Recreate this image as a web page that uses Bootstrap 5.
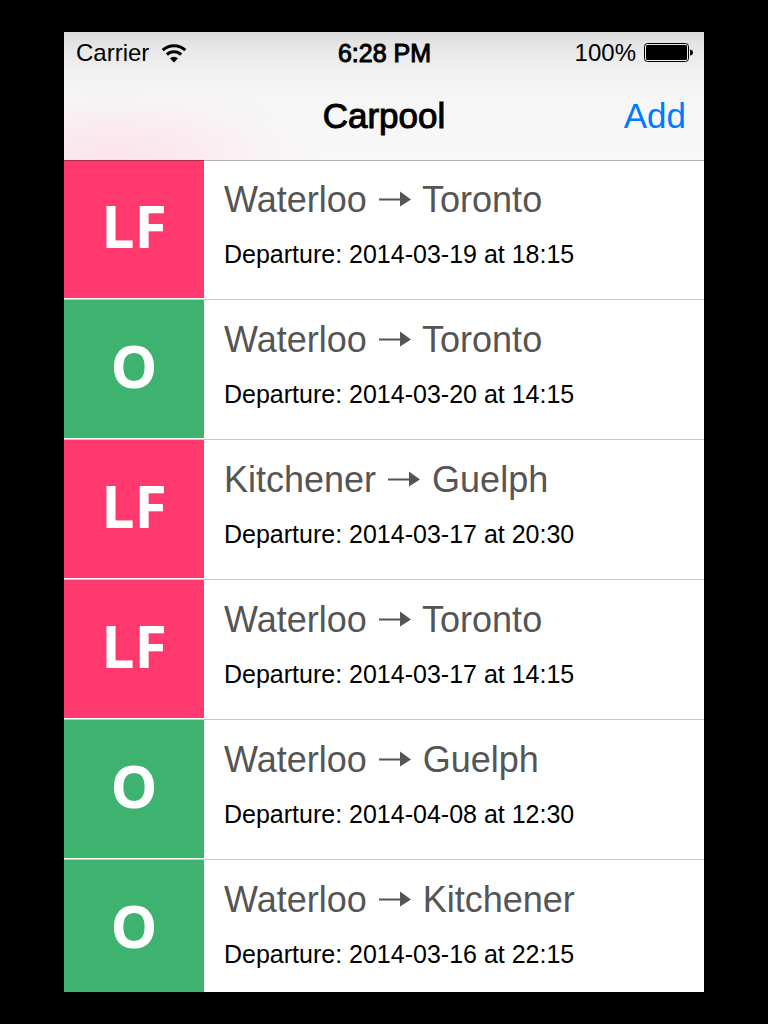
<!DOCTYPE html>
<html lang="en">
<head>
<meta charset="utf-8">
<meta name="viewport" content="width=device-width, initial-scale=1">
<title>Carpool</title>
<link href="https://cdn.jsdelivr.net/npm/bootstrap@5.3.0/dist/css/bootstrap.min.css" rel="stylesheet">
<style>
  body { background: #000; color: #000; font-family: "Liberation Sans", Arial, sans-serif; }
  .frame { padding: 32px 64px; }
  .app { height: calc(100vh - 64px); }
  .topbar {
    padding-bottom: 1px;
    background:
      linear-gradient(90deg, #b3284d 140px, #b2b2b2 140px) left bottom / 100% 1px no-repeat,
      radial-gradient(ellipse 210px 80px at 50px 100%, rgba(255, 205, 220, .5), rgba(255, 215, 226, .4) 40%, rgba(255, 225, 232, .15) 75%, rgba(255, 235, 240, 0)),
      linear-gradient(#dcdcdc, #e8e8e8 18px, #f1f1f1 40px, #f6f6f6 66px, #f8f8f8);
  }
  .three-up { display: grid; grid-template-columns: 1fr auto 1fr; align-items: center; }
  .status { height: 42px; padding: 0 11px 0 12px; font-size: 24px; line-height: 42px; }
  .titlebar { height: 86px; padding: 0 18px 2px; }
  .clock { font-size: 25px; -webkit-text-stroke: 1px #000; }
  .wifi { margin-left: 10px; }
  .heading { font-size: 35px; line-height: 40px; -webkit-text-stroke: 1px #000; }
  .add-btn { font-size: 35px; line-height: 40px; color: #007aff; }
  .ride { height: 140px; border-bottom: 1px solid #c8c7cc; }
  .ride:first-child { height: 139px; }
  .ride:first-child .info { padding-top: 18px; }
  .tile { width: 140px; margin-bottom: 1px; padding-bottom: 8px; font-family: "Open Sans", "Noto Sans", sans-serif; font-size: 59px; color: #fff; }
  .tile-pink { background: #ff386d; }
  .tile-green { background: #3eb370; }
  .info { padding: 19px 20px 0; }
  .route { font-size: 36px; line-height: 42px; color: #555; }
  .arrow {
    color: transparent;
    background: url("data:image/svg+xml,%3Csvg xmlns='http://www.w3.org/2000/svg' width='36' height='42'%3E%3Cpath fill='%23555' d='M2 20h21v-7l11 8-11 7v-6H2z'/%3E%3C/svg%3E") center / 36px 42px no-repeat;
  }
  .depart { font-size: 25px; line-height: 30px; margin-top: 18px; }
</style>
</head>
<body>
<div class="frame">
  <div class="app bg-white overflow-hidden d-flex flex-column">
    <header class="topbar flex-shrink-0">
      <div class="status three-up">
        <div class="d-flex align-items-center">
          <span>Carrier</span>
          <svg class="wifi" width="30" height="20" viewBox="0 0 30 20" aria-label="Wi-Fi" role="img">
            <g fill="none" stroke="#000" stroke-width="3">
              <path d="M3.700 7.200a16.500 16.500 0 0 1 22.600 0"/>
              <path d="M7.900 11.700a10.200 10.200 0 0 1 14.200 0"/>
            </g>
            <path d="M11 15.300a5.700 5.700 0 0 1 8 0L15 19.400z"/>
          </svg>
        </div>
        <span class="clock">6:28 PM</span>
        <div class="d-flex align-items-center justify-content-end">
          <span>100%</span>
          <svg class="ms-2" width="49" height="20" viewBox="0 0 49 20" aria-label="Battery full" role="img">
            <rect x=".5" y=".5" width="44" height="18" rx="3" fill="none" stroke="#000"/>
            <rect x="2" y="2" width="41" height="15" rx="1.500"/>
            <path d="M46 6.500q3 .5 3 3t-3 3z"/>
          </svg>
        </div>
      </div>
      <div class="titlebar three-up">
        <span></span>
        <h1 class="heading fw-normal m-0">Carpool</h1>
        <button type="button" class="add-btn btn border-0 p-0 ms-auto">Add</button>
      </div>
    </header>
    <ul class="list-unstyled m-0">
      <li class="ride d-flex">
        <div class="tile tile-pink fw-bold d-flex align-items-center justify-content-center flex-shrink-0">LF</div>
        <div class="info"><h2 class="route fw-normal m-0">Waterloo <span class="arrow">→</span> Toronto</h2><p class="depart mb-0">Departure: 2014-03-19 at 18:15</p></div>
      </li>
      <li class="ride d-flex">
        <div class="tile tile-green fw-bold d-flex align-items-center justify-content-center flex-shrink-0">O</div>
        <div class="info"><h2 class="route fw-normal m-0">Waterloo <span class="arrow">→</span> Toronto</h2><p class="depart mb-0">Departure: 2014-03-20 at 14:15</p></div>
      </li>
      <li class="ride d-flex">
        <div class="tile tile-pink fw-bold d-flex align-items-center justify-content-center flex-shrink-0">LF</div>
        <div class="info"><h2 class="route fw-normal m-0">Kitchener <span class="arrow">→</span> Guelph</h2><p class="depart mb-0">Departure: 2014-03-17 at 20:30</p></div>
      </li>
      <li class="ride d-flex">
        <div class="tile tile-pink fw-bold d-flex align-items-center justify-content-center flex-shrink-0">LF</div>
        <div class="info"><h2 class="route fw-normal m-0">Waterloo <span class="arrow">→</span> Toronto</h2><p class="depart mb-0">Departure: 2014-03-17 at 14:15</p></div>
      </li>
      <li class="ride d-flex">
        <div class="tile tile-green fw-bold d-flex align-items-center justify-content-center flex-shrink-0">O</div>
        <div class="info"><h2 class="route fw-normal m-0">Waterloo <span class="arrow">→</span> Guelph</h2><p class="depart mb-0">Departure: 2014-04-08 at 12:30</p></div>
      </li>
      <li class="ride d-flex">
        <div class="tile tile-green fw-bold d-flex align-items-center justify-content-center flex-shrink-0">O</div>
        <div class="info"><h2 class="route fw-normal m-0">Waterloo <span class="arrow">→</span> Kitchener</h2><p class="depart mb-0">Departure: 2014-03-16 at 22:15</p></div>
      </li>
    </ul>
  </div>
</div>
</body>
</html>
